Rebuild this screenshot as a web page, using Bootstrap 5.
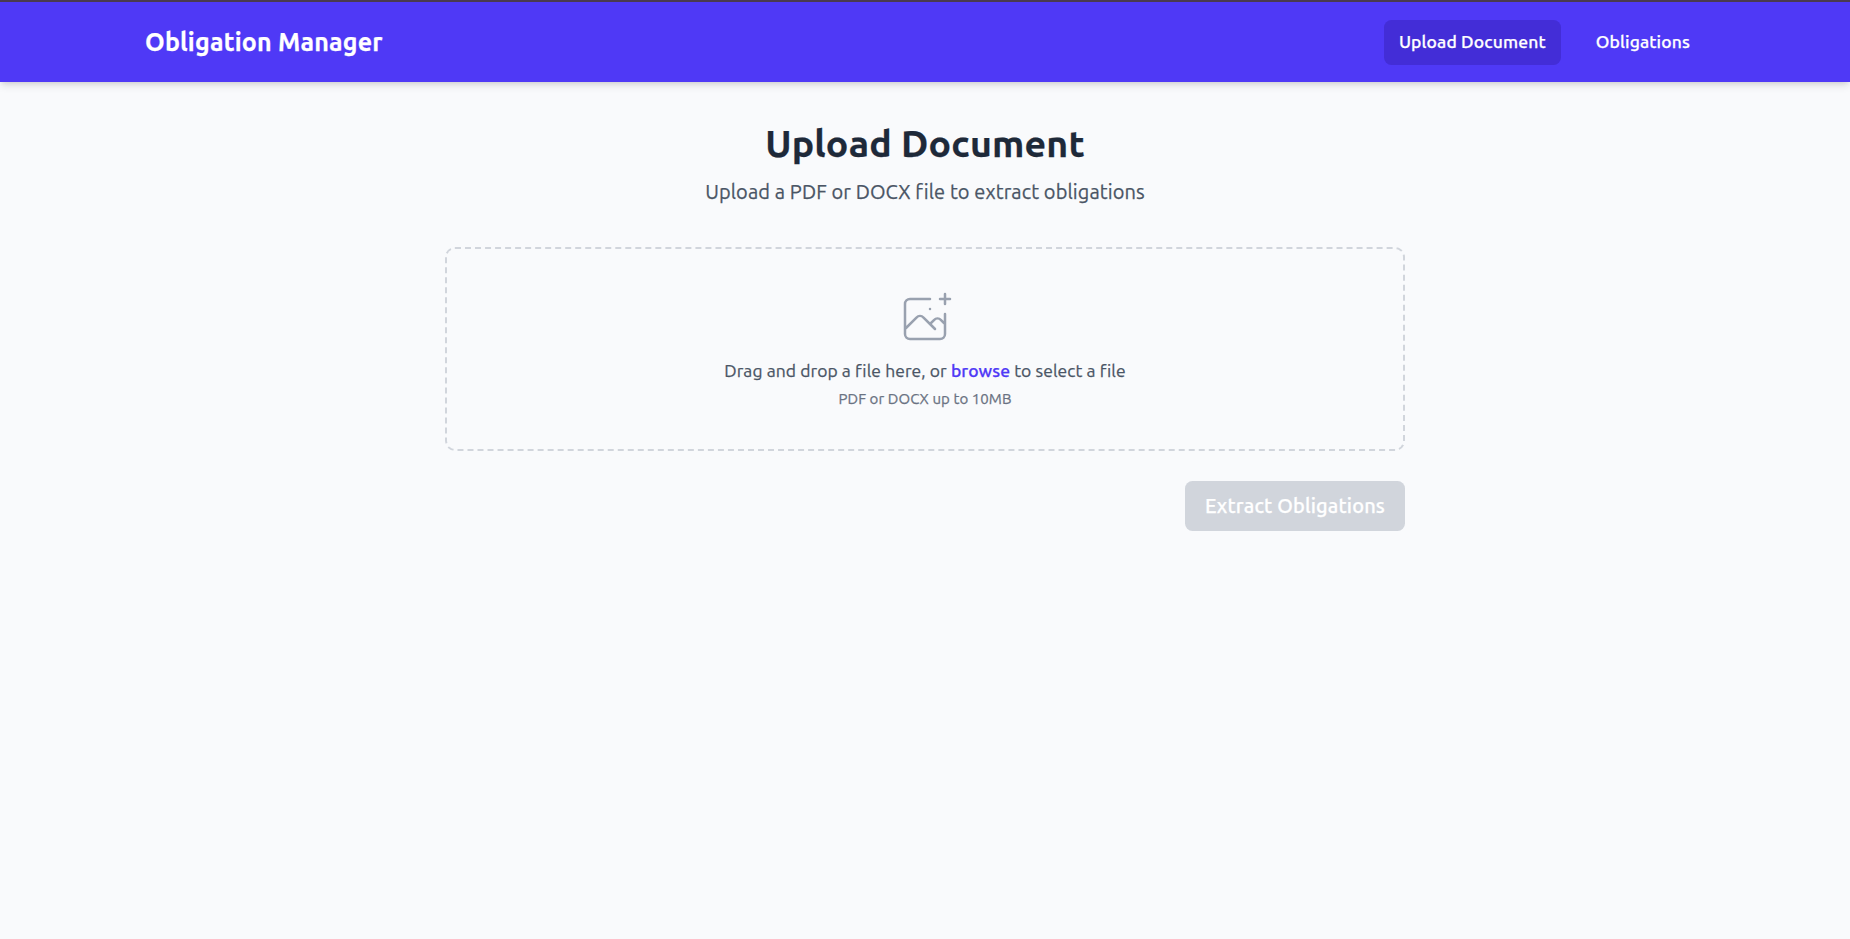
<!DOCTYPE html>
<html lang="en">
<head>
<meta charset="utf-8">
<meta name="viewport" content="width=device-width, initial-scale=1">
<title>Obligation Manager</title>
<link href="https://cdn.jsdelivr.net/npm/bootstrap@5.3.0/dist/css/bootstrap.min.css" rel="stylesheet">
<style>
  body {
    font-family: Ubuntu, "Noto Sans", sans-serif;
    font-size: 17.5px;
    line-height: 25px;
    color: #4a5565;
    background: #f9fafc;
    -webkit-text-stroke: .25px currentColor;
  }
  .app-bar {
    height: 82px;
    border-top: 2px solid #4a3a4f;
    background: #4f39f6;
    box-shadow: 0 5px 7.5px -1px rgba(0,0,0,.1), 0 2.5px 5px -2px rgba(0,0,0,.1);
  }
  .app-width { width: 1560px; max-width: 100%; }
  .app-bar .navbar-brand { font-size: 25px; line-height: 35px; letter-spacing: .2px; }
  .app-bar .nav { gap: 20px; }
  .app-bar .nav-link {
    padding: 9px 15px 11px;
    border-radius: 7.5px;
    color: #fff;
    font-weight: 500;
    letter-spacing: .13px;
  }
  .app-bar .nav-link.active { background: #432dd7; }
  .upload-panel { width: 960px; max-width: 100%; padding-top: 39px; }
  .upload-panel h1 { font-size: 37.5px; line-height: 45px; margin-bottom: 11px; color: #1e2939; letter-spacing: .2px; }
  .subtitle { font-size: 20px; line-height: 30px; margin-bottom: 40px; letter-spacing: .11px; }
  .drop-zone { border: 2px dashed #d1d5dc; border-radius: 10px; padding: 40px; margin-bottom: 30px; }
  .drop-zone svg { color: #99a1af; margin-bottom: 9px; }
  .drop-zone p { margin-bottom: 6px; letter-spacing: .07px; }
  .drop-zone a { color: #4f39f6; font-weight: 500; }
  .drop-zone .hint { font-size: 15px; line-height: 20px; margin: 0; color: #6a7282; letter-spacing: .08px; }
  .btn-extract, .btn-extract:disabled {
    padding: 10px 20px;
    border: 0;
    border-radius: 7.5px;
    font-size: 20px;
    line-height: 30px;
    font-weight: 500;
    letter-spacing: .15px;
    color: #fff;
    background: #d1d5dc;
    opacity: 1;
    -webkit-text-stroke: .25px #fff;
  }
</style>
</head>
<body>
<header class="app-bar">
  <div class="app-width mx-auto h-100 d-flex align-items-center justify-content-between">
    <a class="navbar-brand fw-bold text-white" href="#">Obligation Manager</a>
    <nav class="nav">
      <a class="nav-link active" href="#">Upload Document</a>
      <a class="nav-link" href="#">Obligations</a>
    </nav>
  </div>
</header>
<main class="upload-panel mx-auto">
  <div class="text-center">
    <h1 class="fw-bold">Upload Document</h1>
    <p class="subtitle">Upload a PDF or DOCX file to extract obligations</p>
    <div class="drop-zone">
      <svg class="d-block mx-auto" width="60" height="60" viewBox="0 0 48 48" fill="none" stroke="currentColor" stroke-width="2" stroke-linecap="round" stroke-linejoin="round" aria-hidden="true">
        <path d="M28 8H12a4 4 0 00-4 4v20m32-12v8m0 0v8a4 4 0 01-4 4H12a4 4 0 01-4-4v-4m32-4l-3.172-3.172a4 4 0 00-5.656 0L28 28M8 32l9.172-9.172a4 4 0 015.656 0L28 28m0 0l4 4m4-24h8m-4-4v8m-12 4h.02"/>
      </svg>
      <p>Drag and drop a file here, or <a class="text-decoration-none" href="#">browse</a> to select a file</p>
      <p class="hint">PDF or DOCX up to 10MB</p>
    </div>
  </div>
  <div class="d-flex justify-content-end">
    <button class="btn btn-extract" type="button" disabled>Extract Obligations</button>
  </div>
</main>
<script src="https://cdn.jsdelivr.net/npm/bootstrap@5.3.0/dist/js/bootstrap.bundle.min.js"></script>
</body>
</html>
